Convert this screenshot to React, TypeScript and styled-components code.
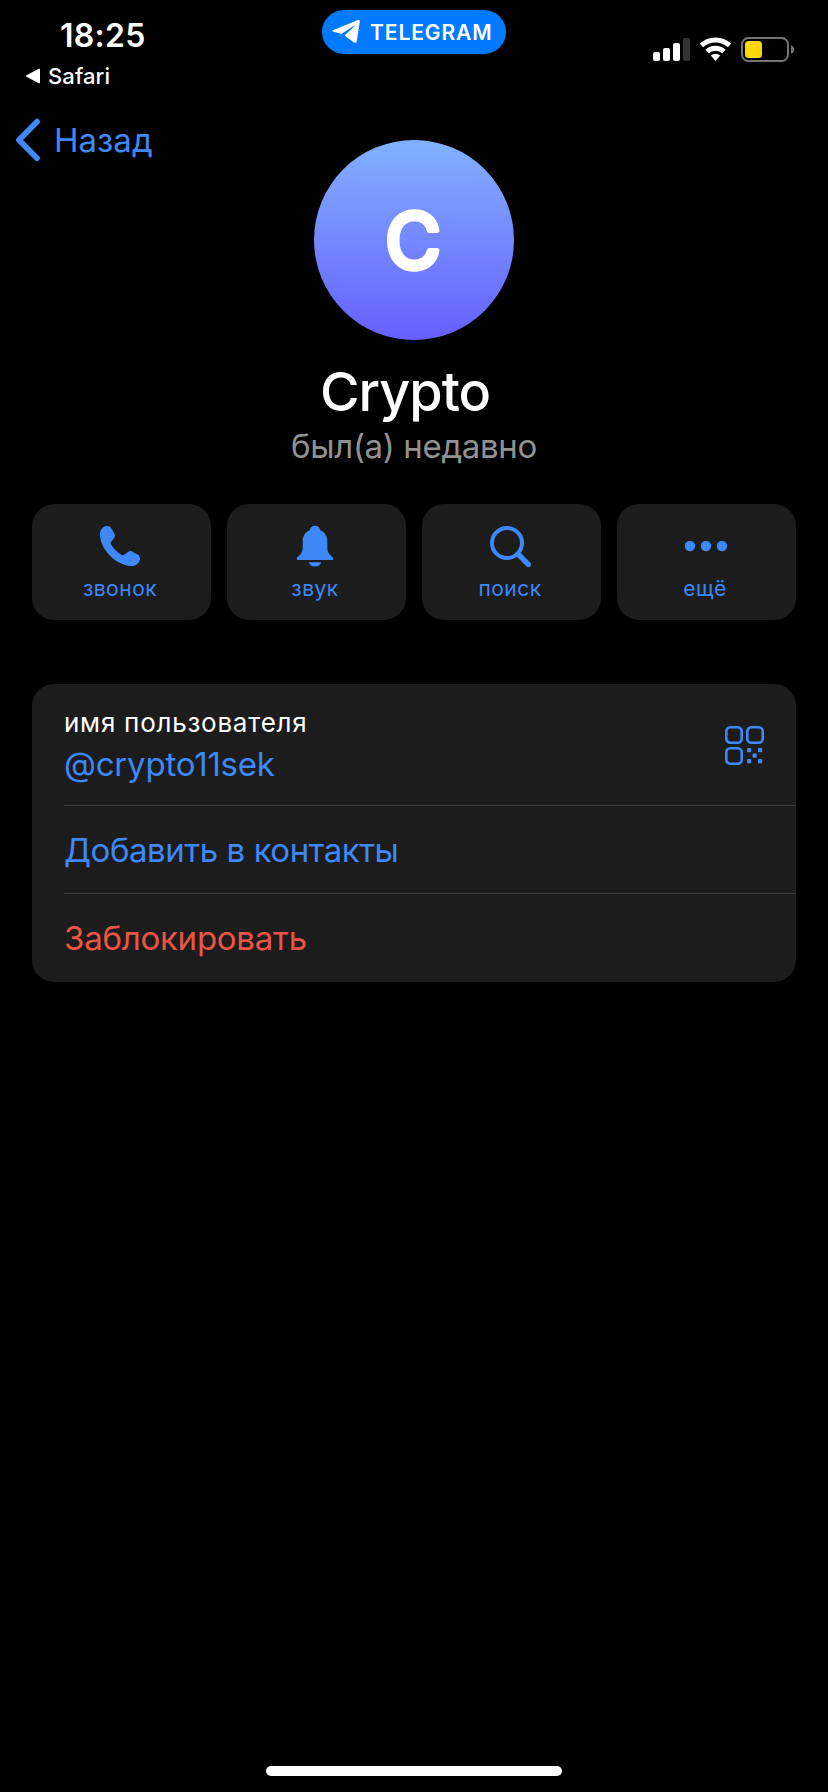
import React from "react";
import styled, { createGlobalStyle } from "styled-components";

const ACCENT = "#3e88f7";

const GlobalStyle = createGlobalStyle`
  * { box-sizing: border-box; }
  body {
    margin: 0;
    background: #000;
    font-family: Inter, "Noto Sans", sans-serif;
  }
`;

const Screen = styled.div`
  width: 828px;
  height: 1792px;
  display: flex;
  flex-direction: column;
  background: #000;
  color: #fff;
  overflow: hidden;
`;

const StatusBar = styled.header`
  height: 112px;
  display: grid;
  grid-template-columns: 1fr 184px 1fr;
  align-items: start;
`;

const Clock = styled.div`
  padding: 16px 0 0 60px;
  font-size: 32px;
  line-height: 40px;
  font-weight: 600;
  letter-spacing: 0.3px;
`;

const BackToApp = styled.div`
  display: flex;
  align-items: center;
  gap: 8px;
  padding: 6px 0 0 26px;
  font-size: 22px;
  line-height: 28px;
  font-weight: 500;
  letter-spacing: 0.1px;
`;

const AppPill = styled.div`
  margin-top: 10px;
  height: 44px;
  padding-left: 10px;
  border-radius: 22px;
  background: #007aff;
  display: flex;
  align-items: center;
  gap: 9px;
  font-size: 21px;
  line-height: 28px;
  font-weight: 600;
  letter-spacing: 0.9px;
`;

const PillText = styled.span`
  padding-top: 2px;
`;

const Indicators = styled.div`
  display: flex;
  justify-content: flex-end;
  padding: 36px 33px 0 0;
`;

const Profile = styled.section`
  display: grid;
  grid-template-columns: 1fr 200px 1fr;
  align-items: start;
`;

const BackButton = styled.button`
  border: 0;
  background: none;
  height: 56px;
  padding: 0 0 0 14px;
  display: flex;
  align-items: center;
  gap: 12px;
  color: ${ACCENT};
  font: 400 33px/56px Inter, "Noto Sans", sans-serif;
  letter-spacing: 0;
`;

const Avatar = styled.div`
  margin-top: 28px;
  width: 200px;
  height: 200px;
  border-radius: 50%;
  background: linear-gradient(#82b1ff, #665fff);
`;

const Initial = styled.text`
  font-size: 76px;
  font-weight: 400;
  fill: #fff;
  stroke: #fff;
  stroke-width: 5.6px;
  stroke-linejoin: round;
  text-anchor: middle;
`;

const Name = styled.h1`
  margin: 22px 18px 0 0;
  text-align: center;
  font-size: 54px;
  line-height: 60px;
  font-weight: 500;
  letter-spacing: -1px;
`;

const LastSeen = styled.p`
  margin: 4px 0 0;
  text-align: center;
  font-size: 33px;
  line-height: 40px;
  letter-spacing: -0.35px;
  color: #929292;
`;

const Actions = styled.div`
  display: grid;
  grid-template-columns: repeat(4, 1fr);
  gap: 16px;
  margin: 38px 32px 0;
`;

const Action = styled.button`
  border: 0;
  height: 116px;
  padding: 18px 3px 0 0;
  border-radius: 22px;
  background: #1c1c1d;
  color: ${ACCENT};
  display: flex;
  flex-direction: column;
  align-items: center;
  gap: 6px;
  font: 400 21px/26px Inter, "Noto Sans", sans-serif;
  letter-spacing: 0.5px;
`;

const Panel = styled.div`
  margin: 64px 32px 0;
  padding-left: 32px;
  border-radius: 22px;
  background: #1c1c1d;
`;

const Row = styled.div<{ $height: number; $color?: string; $spacing?: number }>`
  height: ${(p) => p.$height}px;
  display: flex;
  align-items: center;
  justify-content: space-between;
  padding-right: 32px;
  font-size: 33px;
  line-height: 40px;
  letter-spacing: ${(p) => p.$spacing || 0}px;
  color: ${(p) => p.$color || ACCENT};

  & + & {
    border-top: 1px solid #3d3d3f;
  }
`;

const Label = styled.div`
  padding-top: 2px;
  color: #fff;
  font-size: 26px;
  line-height: 32px;
  letter-spacing: 0.75px;
`;

const Handle = styled.div`
  margin-top: 5px;
  line-height: 40px;
`;

const HomeIndicator = styled.div`
  width: 296px;
  height: 10px;
  margin: auto auto 16px;
  border-radius: 5px;
  background: #fff;
`;

const PhoneIcon = () => (
  <svg width="48" height="48" viewBox="-4 -4 48 48" fill="currentColor">
    <path d="M7 0C9 0 10.500 .8 11.500 2.500L14.500 8C15.200 9.400 15.100 10.600 14.100 12L11.200 15.800C10.500 16.800 10.500 17.600 11.200 18.700C13.800 22.800 17.200 26.200 21.300 28.800C22.400 29.500 23.200 29.500 24.200 28.800L28 25.900C29.400 24.900 30.600 24.800 32 25.500L37.500 28.500C39.200 29.500 40.200 31.200 40 33C39.400 37.500 36 40.300 31 40C23 39.400 15.600 35.200 9.600 29.200C3.600 23 .4 16.500 0 9C-.2 4 2.800 0 7 0Z" />
  </svg>
);

const BellIcon = () => (
  <svg width="48" height="48" viewBox="-6 -4 48 48" fill="currentColor">
    <path d="M18 -.3C20.800 -.3 22.900 1.600 23.300 4.300C27.800 6.300 30.300 10 30.300 15V20.500C30.300 25.500 31.500 27.500 34 29.800C35.500 31.200 36.300 31.900 36.300 32.700C36.300 33.600 35.700 34 34.700 34H1.300C.3 34-.3 33.600-.3 32.700C-.3 31.900.5 31.200 2 29.800C4.500 27.500 5.700 25.500 5.700 20.500V15C5.700 10 8.200 6.300 12.700 4.300C13.100 1.600 15.200 -.3 18 -.3Z" />
    <path d="M11.800 36.300H24.200C23.500 38.900 21.200 40.600 18 40.600C14.800 40.600 12.500 38.900 11.800 36.300Z" />
  </svg>
);

const SearchIcon = () => (
  <svg width="48" height="48" viewBox="0 0 48 48" fill="none" stroke="currentColor" strokeLinecap="round">
    <circle cx="21" cy="21" r="15" strokeWidth="4" />
    <path d="M32 32L42.300 42.300" strokeWidth="5.400" />
  </svg>
);

const MoreIcon = () => (
  <svg width="48" height="48" viewBox="0 0 48 48" fill="currentColor">
    <circle cx="9" cy="24" r="5.200" />
    <circle cx="25" cy="24" r="5.200" />
    <circle cx="41" cy="24" r="5.200" />
  </svg>
);

const QrIcon = () => (
  <svg width="40" height="40" viewBox="0 0 40 40" fill="none" stroke="currentColor" strokeWidth="2.600">
    <rect x="2.300" y="2.300" width="15.400" height="15.400" rx="4" />
    <rect x="23.300" y="2.300" width="15.400" height="15.400" rx="4" />
    <rect x="2.300" y="23.300" width="15.400" height="15.400" rx="4" />
    <g fill="currentColor" stroke="none">
      <rect x="23" y="23" width="4.200" height="4.200" rx=".9" />
      <rect x="34" y="23" width="4.200" height="4.200" rx=".9" />
      <rect x="28.500" y="28.500" width="4.200" height="4.200" rx=".9" />
      <rect x="23" y="34" width="4.200" height="4.200" rx=".9" />
      <rect x="34" y="34" width="4.200" height="4.200" rx=".9" />
    </g>
  </svg>
);

const PlaneIcon = () => (
  <svg width="29" height="26" viewBox="0 0 29 26" fill="#fff">
    <path d="M.8 11.300L26 1.100C27.200.7 28 1.400 27.800 2.700L24.700 22.400C24.400 24 23.300 24.400 22 23.500L13.700 17.600C12.800 16.900 12.800 16.300 13.500 15.600L22.300 7.500C22.800 6.900 22.300 6.600 21.700 7L10.500 14.200C9.700 14.700 9 14.800 8.100 14.500L1 12.500C-.1 12.200-.1 11.700.8 11.300Z" />
  </svg>
);

const StatusIcons = () => (
  <svg width="142" height="28" viewBox="0 0 142 28" fill="#fff">
    <rect x="0" y="16" width="7" height="9" rx="2" />
    <rect x="10" y="12" width="7" height="13" rx="2" />
    <rect x="20" y="7" width="7" height="18" rx="2" />
    <rect x="30" y="2" width="7" height="23" rx="2" fill="#333" />
    <g fill="none" stroke="#fff" strokeWidth="5">
      <path d="M48.400 9.400A21 21 0 0 1 76.600 9.400" />
      <path d="M54 15.500A12.600 12.600 0 0 1 71 15.500" />
    </g>
    <path d="M57.800 19.600A7 7 0 0 1 67.200 19.600L62.500 25Z" />
    <rect x="89" y="2" width="46" height="23" rx="6.500" fill="none" stroke="#747474" strokeWidth="2" />
    <rect x="92" y="5" width="17" height="17" rx="3.500" fill="#ffd60a" />
    <path d="M138 9.200C140 10 141.300 11.600 141.300 13.500C141.300 15.400 140 17 138 17.800Z" fill="#747474" />
  </svg>
);

const actions = [
  { label: "звонок", Icon: PhoneIcon },
  { label: "звук", Icon: BellIcon },
  { label: "поиск", Icon: SearchIcon },
  { label: "ещё", Icon: MoreIcon },
];

export default function App() {
  return (
    <Screen>
      <GlobalStyle />
      <StatusBar>
        <div>
          <Clock>18:25</Clock>
          <BackToApp>
            <svg width="14" height="16" viewBox="0 0 14 16" fill="#fff">
              <path d="M.6 7.200L12.300 1C13.300.5 14 .9 14 2V14C14 15.100 13.300 15.500 12.300 15L.6 8.800C-.2 8.300-.2 7.700.6 7.200Z" />
            </svg>
            Safari
          </BackToApp>
        </div>
        <AppPill>
          <PlaneIcon />
          <PillText>TELEGRAM</PillText>
        </AppPill>
        <Indicators>
          <StatusIcons />
        </Indicators>
      </StatusBar>
      <Profile>
        <BackButton>
          <svg width="28" height="44" viewBox="0 0 28 44" fill="none" stroke="currentColor" strokeWidth="5.800" strokeLinecap="round" strokeLinejoin="round">
            <path d="M23 3.700L5 22L23 40.300" />
          </svg>
          Назад
        </BackButton>
        <Avatar>
          <svg width="200" height="200" viewBox="0 0 200 200">
            <Initial x="99" y="128">C</Initial>
          </svg>
        </Avatar>
      </Profile>
      <Name>Crypto</Name>
      <LastSeen>был(а) недавно</LastSeen>
      <Actions>
        {actions.map(({ label, Icon }) => (
          <Action key={label}>
            <Icon />
            {label}
          </Action>
        ))}
      </Actions>
      <Panel>
        <Row $height={121} $spacing={-0.2}>
          <div>
            <Label>имя пользователя</Label>
            <Handle>@crypto11sek</Handle>
          </div>
          <QrIcon />
        </Row>
        <Row $height={88} $spacing={-0.45}>
          Добавить в контакты
        </Row>
        <Row $height={89} $color="#eb5545" $spacing={-0.25}>
          Заблокировать
        </Row>
      </Panel>
      <HomeIndicator />
    </Screen>
  );
}
